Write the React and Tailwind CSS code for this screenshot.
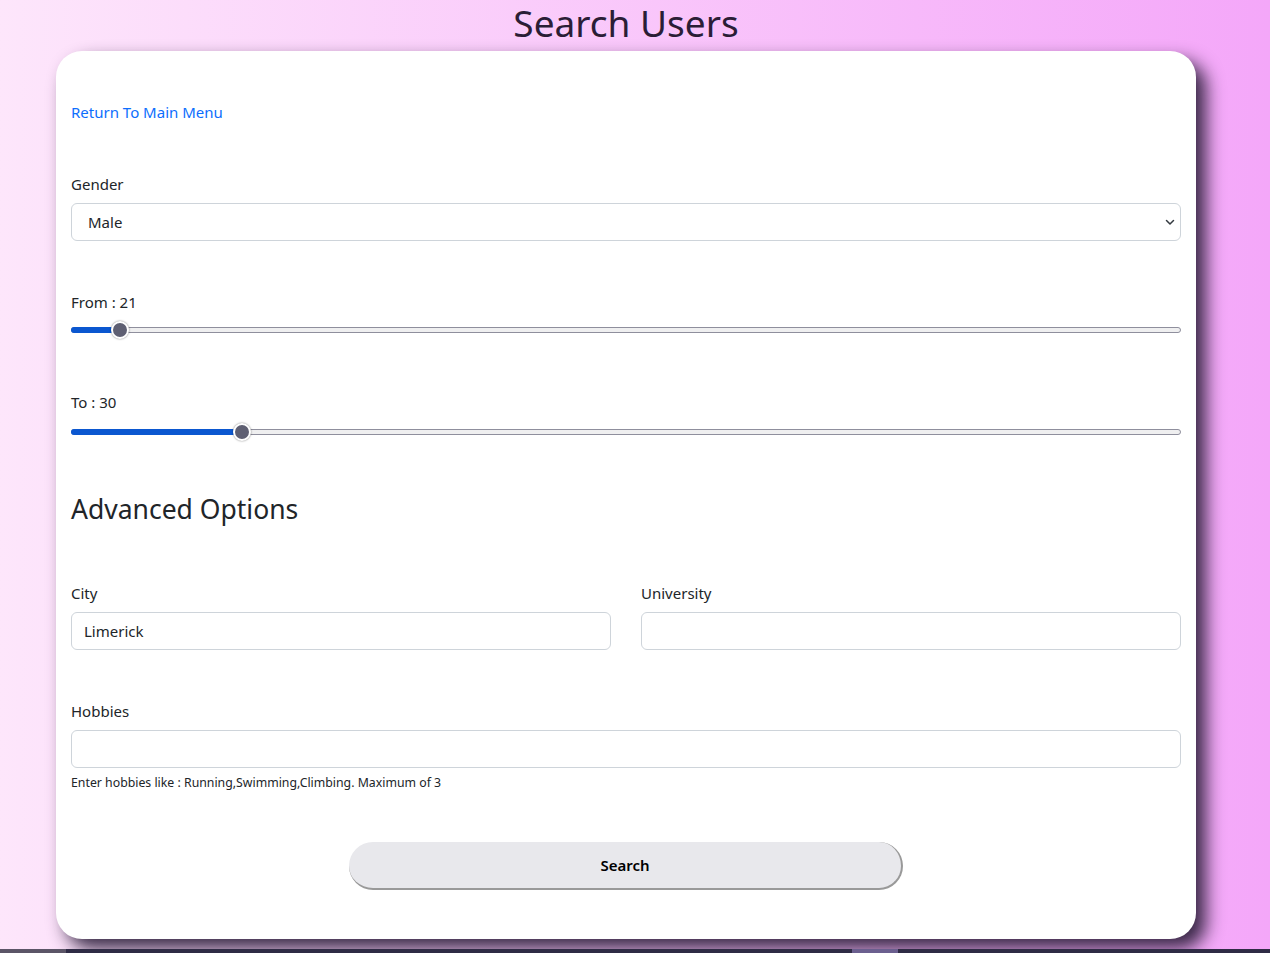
import React from "react";

const MIN = 18;
const MAX = 99;

function Slider({ value }) {
  const pct = ((value - MIN) / (MAX - MIN)) * 100;
  return (
    <div className="relative h-[18px] w-full">
      <div className="absolute left-0 right-0 top-[6px] h-[6px] rounded-full border border-[#8f8f9d] bg-[#efeff0]" />
      <div
        className="absolute left-0 top-[6px] h-[6px] rounded-full bg-[#0b57d0]"
        style={{ width: `calc(9px + (100% - 18px) * ${pct / 100})` }}
      />
      <div
        className="absolute top-0 h-[18px] w-[18px] rounded-full border-2 border-white bg-[#5e5f72] shadow-[0_0_2px_rgba(0,0,0,0.5)]"
        style={{ left: `calc((100% - 18px) * ${pct / 100})` }}
      />
    </div>
  );
}

export default function App() {
  const font = { fontFamily: '"Noto Sans", "Open Sans", sans-serif' };
  return (
    <div
      className="relative h-[953px] w-full overflow-hidden bg-gradient-to-r from-[#fde6fb] to-[#f4a7f9] text-[#212529]"
      style={font}
    >
      <h1 className="m-0 flex h-[51px] w-[1252px] items-start justify-center pt-[1px] text-center text-[37px] leading-[44px] text-[#2b1d36]">
        Search Users
      </h1>
      <div className="ml-[56px] w-[1140px] rounded-[26px] bg-white px-[15px] pb-[49px] pt-[49px] shadow-[10px_10px_18px_rgba(45,32,60,0.95)]">
        <a className="block text-[15px] leading-[24px] text-[#0d6efd]" href="#">
          Return To Main Menu
        </a>

        <div className="mt-[48px] text-[15px] leading-[24px]">Gender</div>
        <div className="relative mt-[7px] flex h-[38px] items-center rounded-[6px] border border-[#ced4da] pl-[16px] text-[15px] text-[#212529]">
          Male
          <svg
            className="absolute right-[5px] top-[14px]"
            width="10"
            height="8"
            viewBox="0 0 10 8"
          >
            <path d="M1.5 2.5 L5 6 L8.5 2.5" fill="none" stroke="#343a40" strokeWidth="1.5" strokeLinecap="round" strokeLinejoin="round" />
          </svg>
        </div>

        <div className="mt-[49px] text-[15px] leading-[24px]">From : 21</div>
        <div className="mt-[7px]">
          <Slider value={21} />
        </div>

        <div className="mt-[51px] text-[15px] leading-[24px]">To : 30</div>
        <div className="mt-[9px]">
          <Slider value={30} />
        </div>

        <h3 className="mt-[51px] text-[26.5px] leading-[34px] text-[#212529]">Advanced Options</h3>

        <div className="mt-[55px] grid grid-cols-2 gap-x-[30px]">
          <div>
            <div className="text-[15px] leading-[24px]">City</div>
            <div className="mt-[7px] flex h-[38px] items-center rounded-[6px] border border-[#ced4da] pl-[12px] text-[15px] text-[#212529]">
              Limerick
            </div>
          </div>
          <div>
            <div className="text-[15px] leading-[24px]">University</div>
            <div className="mt-[7px] h-[38px] rounded-[6px] border border-[#ced4da]" />
          </div>
        </div>

        <div className="mt-[49px] text-[15px] leading-[24px]">Hobbies</div>
        <div className="mt-[7px] h-[38px] rounded-[6px] border border-[#ced4da]" />
        <div className="mt-[6px] text-[12.3px] leading-[18px] text-[#212529]">
          Enter hobbies like : Running,Swimming,Climbing. Maximum of 3
        </div>

        <div className="mt-[50px] flex justify-center">
          <button className="h-[48px] w-[554px] rounded-full border-b-2 border-r-2 border-[#999] bg-[#e8e8ec] text-[15px] font-semibold text-black">
            Search
          </button>
        </div>
      </div>

      <div className="mt-[10px] flex h-[10px]">
        <div className="w-[66px] bg-[#5b5567]" />
        <div className="w-[786px] bg-[#2f2b45]" />
        <div className="w-[46px] bg-[#6b5f8f]" />
        <div className="flex-1 bg-[#2f2b45]" />
      </div>
    </div>
  );
}
